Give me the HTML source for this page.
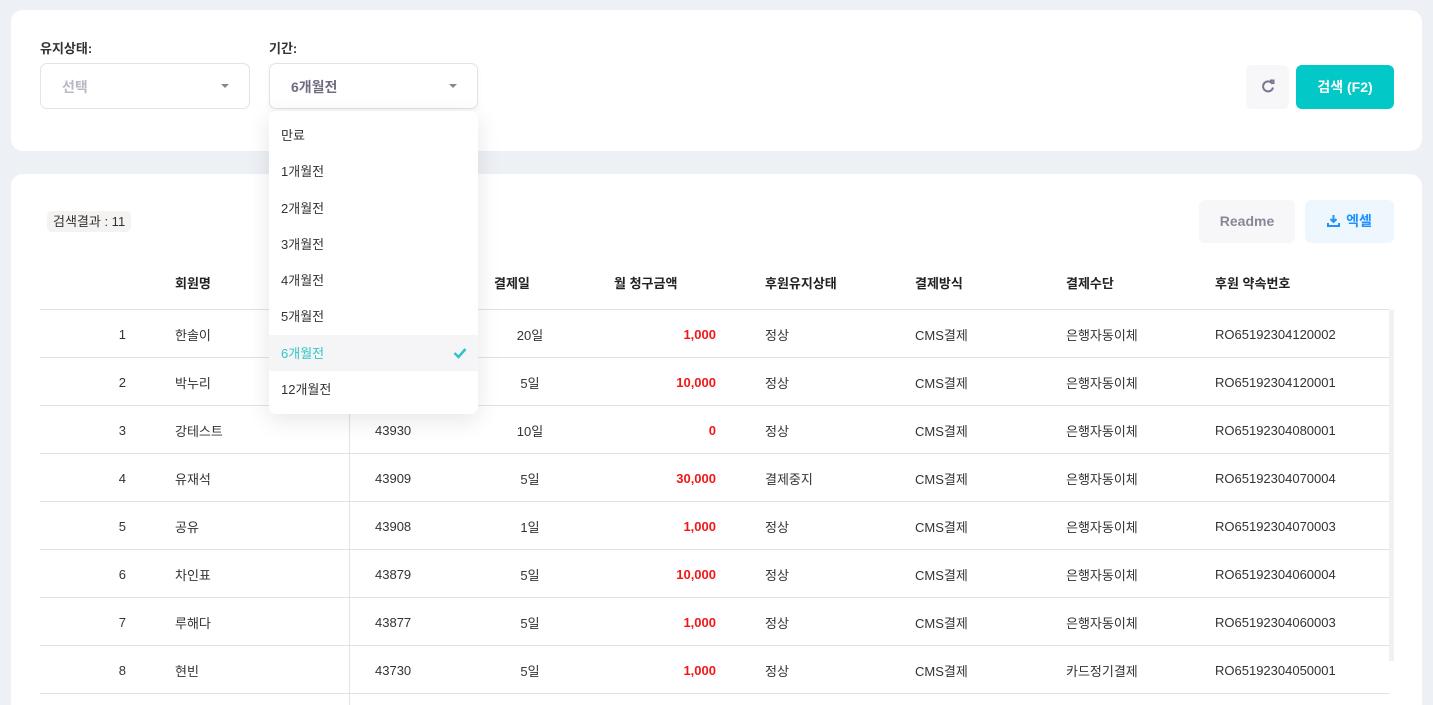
<!DOCTYPE html>
<html><head><meta charset="utf-8"><style>
*{box-sizing:border-box;margin:0;padding:0}
html,body{width:1433px;height:705px;overflow:hidden}
body{background:#edf0f5;font-family:"Liberation Sans","Noto Sans CJK KR",sans-serif;color:#333;font-size:13px;position:relative}
.card{position:absolute;background:#fff;border-radius:12px}
.lbl{position:absolute;font-size:13px;font-weight:bold;color:#333}
.sel{position:absolute;height:46px;border:1px solid #e3e1ee;border-radius:7px;background:#fff;font-size:14px;font-weight:bold;padding:0 21px;line-height:46px}
.caret{position:absolute;right:20px;top:20px;width:0;height:0;border-left:4px solid transparent;border-right:4px solid transparent;border-top:4px solid #888}
.dd{position:absolute;left:269px;top:111px;width:209px;height:303px;background:#fff;border-radius:7px;box-shadow:0 6px 24px rgba(0,0,0,.10);z-index:5}
.dd div{height:36.3px;line-height:38px;padding-left:12px;font-size:13px;color:#333;position:relative}
.dd .on{background:#f5f5f7;color:#30c6c6}
table{position:absolute;left:40px;top:257px;border-collapse:collapse;width:1349px;font-size:13px;table-layout:fixed}
th{height:52px;font-weight:bold;color:#222;text-align:left;border-bottom:1px solid #e2e2e2;padding-left:24px}
td{height:48px;border-bottom:1px solid #e2e2e2;color:#333;padding-left:24px;padding-top:2px}
.r{color:#f01818;font-weight:bold;text-align:right}
</style></head><body>
<div class="card" style="left:11px;top:10px;width:1411px;height:141px"></div>
<div class="card" style="left:11px;top:174px;width:1411px;height:560px"></div>
<div class="lbl" style="left:40px;top:38px">유지상태:</div>
<div class="lbl" style="left:269px;top:38px">기간:</div>
<div class="sel" style="left:40px;top:63px;width:210px;color:#b9b6c6">선택<span class="caret"></span></div>
<div class="sel" style="left:269px;top:63px;width:209px;color:#6f6b80;box-shadow:0 2px 6px rgba(0,0,0,.05)">6개월전<span class="caret"></span></div>
<div style="position:absolute;left:1246px;top:65px;width:43px;height:44px;background:#f7f7f9;border-radius:6px;text-align:center;padding-top:14px"><svg width="14" height="14" viewBox="0 0 14 14"><path d="M11.5 5A5 5 0 1 0 12 8.5" stroke="#7a7690" stroke-width="2" fill="none"/><path d="M9 1.5h3.5V5" stroke="#7a7690" stroke-width="2" fill="none"/></svg></div>
<div style="position:absolute;left:1296px;top:65px;width:98px;height:44px;background:#03c8c8;border-radius:6px;color:#fff;font-size:14px;font-weight:bold;text-align:center;line-height:44px">검색 (F2)</div>
<div style="position:absolute;left:47px;top:211px;height:21px;padding:0 6px;background:#f4f3f2;border-radius:5px;font-size:13px;line-height:21px;color:#333">검색결과 : 11</div>
<div style="position:absolute;left:1199px;top:200px;width:96px;height:43px;background:#f7f7f9;border-radius:6px;color:#8a8699;font-size:14px;font-weight:bold;text-align:center;line-height:43px">Readme</div>
<div style="position:absolute;left:1305px;top:200px;width:89px;height:43px;background:#eff7fe;border-radius:6px;color:#1e90ff;font-size:14px;font-weight:bold;text-align:center;line-height:43px"><svg width="13" height="13" viewBox="0 0 13 13" style="vertical-align:-1px;margin-right:6px"><path d="M6.5 1v7M3.5 5l3 3 3-3" stroke="#1e90ff" stroke-width="2" fill="none"/><path d="M1 9v3h11V9" stroke="#1e90ff" stroke-width="2" fill="none"/></svg>엑셀</div>
<table>
<colgroup><col style="width:135px"><col style="width:174px"><col style="width:121px"><col style="width:120px"><col style="width:151px"><col style="width:150px"><col style="width:151px"><col style="width:149px"><col style="width:198px"></colgroup>
<tr><th></th><th style="padding-left:0">회원명</th><th></th><th>결제일</th><th>월 청구금액</th><th>후원유지상태</th><th>결제방식</th><th>결제수단</th><th>후원 약속번호</th></tr>
<tbody id="tb"></tbody>
</table>
<div style="position:absolute;left:349px;top:309px;width:1px;height:396px;background:#e2e2e2"></div>
<div style="position:absolute;left:1389px;top:310px;width:5px;height:351px;background:#f1f1f1"></div>
<div class="dd">
<div style="margin-top:6px">만료</div><div>1개월전</div><div>2개월전</div><div>3개월전</div><div>4개월전</div><div>5개월전</div>
<div class="on">6개월전<svg width="14" height="12" viewBox="0 0 14 12" style="position:absolute;right:11px;top:12px"><path d="M1.5 6l4 4 7-8" stroke="#30c6c6" stroke-width="2.6" fill="none"/></svg></div>
<div>12개월전</div>
</div>
<script>
var d=[["1","한솔이","","20일","1,000","정상","은행자동이체","RO65192304120002"],["2","박누리","","5일","10,000","정상","은행자동이체","RO65192304120001"],["3","강테스트","43930","10일","0","정상","은행자동이체","RO65192304080001"],["4","유재석","43909","5일","30,000","결제중지","은행자동이체","RO65192304070004"],["5","공유","43908","1일","1,000","정상","은행자동이체","RO65192304070003"],["6","차인표","43879","5일","10,000","정상","은행자동이체","RO65192304060004"],["7","루해다","43877","5일","1,000","정상","은행자동이체","RO65192304060003"],["8","현빈","43730","5일","1,000","정상","카드정기결제","RO65192304050001"]];
var h="";d.forEach(function(r){h+='<tr><td style="text-align:right;padding-right:49px;padding-left:0">'+r[0]+'</td><td style="padding-left:0">'+r[1]+'</td><td style="padding-left:26px">'+r[2]+'</td><td style="text-align:center;padding-left:0">'+r[3]+'</td><td class="r" style="padding-right:25px;padding-left:0">'+r[4]+'</td><td>'+r[5]+'</td><td>CMS결제</td><td>'+r[6]+'</td><td>'+r[7]+'</td></tr>'});
document.getElementById("tb").innerHTML=h;
</script>
</body></html>
